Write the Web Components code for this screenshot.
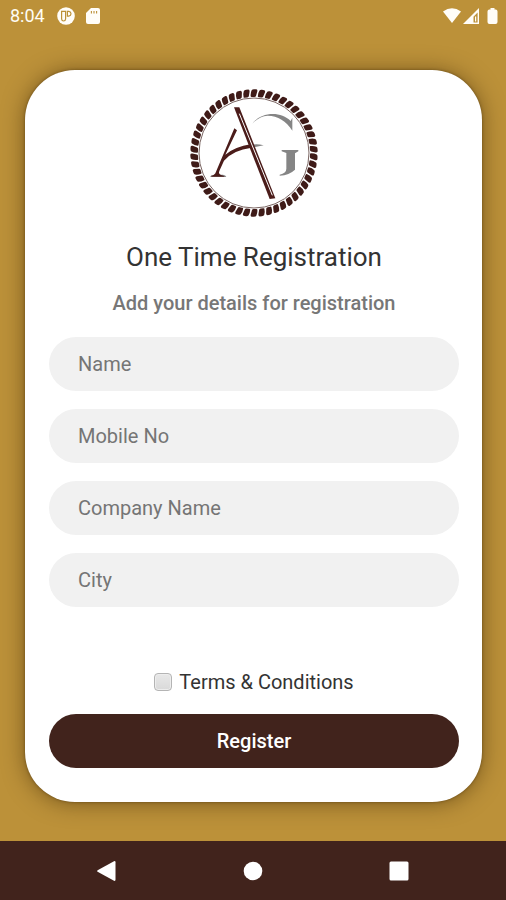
<!DOCTYPE html>
<html lang="en">
<head>
<meta charset="utf-8">
<meta name="viewport" content="width=device-width, initial-scale=1">
<title>One Time Registration</title>
<style>
  html { height: 100%; }
  body { margin: 0; min-height: 100%; display: flex; background: #bc9139; font-family: Roboto, "Liberation Sans", sans-serif; }
</style>
</head>
<body>
<app-screen>
  <status-bar slot="top">8:04</status-bar>
  <registration-card>
    <brand-logo slot="logo"></brand-logo>
    <span slot="title">One Time Registration</span>
    <span slot="subtitle">Add your details for registration</span>
    <pill-field label="Name"></pill-field>
    <pill-field label="Mobile No" type="tel"></pill-field>
    <pill-field label="Company Name"></pill-field>
    <pill-field label="City"></pill-field>
    <terms-check slot="terms">Terms &amp; Conditions</terms-check>
    <pill-button slot="action">Register</pill-button>
  </registration-card>
  <navigation-bar slot="bottom"></navigation-bar>
</app-screen>
<script>
const define = (name, html, setup) => {
  const template = document.createElement('template');
  template.innerHTML = html;
  customElements.define(name, class extends HTMLElement {
    constructor() {
      super();
      this.attachShadow({ mode: 'open' }).append(template.content.cloneNode(true));
    }
    connectedCallback() {
      if (setup) setup(this, this.shadowRoot);
    }
  });
};

define('app-screen', `
  <style>
    :host { flex: 1; display: flex; flex-direction: column; min-height: 100vh; }
    main { flex: 1; padding: 38px 24px 39px 25px; display: flex; flex-direction: column; }
  </style>
  <slot name="top"></slot>
  <main><slot></slot></main>
  <slot name="bottom"></slot>`);

define('status-bar', `
  <style>
    :host { display: flex; align-items: center; height: 32px; padding: 0 8px 0 10px; color: #fffdf5; font-size: 18px; line-height: 24px; }
    svg { display: block; fill: #fffdf8; }
    .alerts { display: flex; flex: 1; gap: 10px; padding-left: 12px; }
    .system { display: flex; gap: 2px; }
    .system svg:last-child { margin-left: 6px; }
  </style>
  <slot></slot>
  <div class="alerts">
    <svg width="18" height="18" viewBox="0 0 18 18"><circle cx="9" cy="9" r="8.8"/><path d="M4.6 4.4v7.6q.2 2 2 2t2-2V4.4z" fill="none" stroke="#bc9139" stroke-width="1.2"/><path d="M10.4 4.4h1.4q2.2.4 2.2 2.4t-2.2 2.4h-1.4z" fill="none" stroke="#bc9139" stroke-width="1.2"/></svg>
    <svg width="16" height="18" viewBox="0 0 16 18"><path d="M6 1h7q2 0 2 2v12q0 2-2 2H3q-2 0-2-2V6z"/><path d="M6.4 4v2.4M9 4v2.4M11.6 4v2.4" stroke="#bc9139" stroke-width="1.1"/></svg>
  </div>
  <div class="system">
    <svg width="18" height="18" viewBox="0 0 18 18"><path d="M0 4.5Q9-2 18 4.5L9 16z"/></svg>
    <svg width="16" height="18" viewBox="0 0 16 18"><path d="M0 17 16 1v16z"/><path d="M10.5 15.5V9.8L14.6 5.5v10z" fill="#bc9139"/><path d="M12 9.5h1.2v5H12z"/></svg>
    <svg width="11" height="18" viewBox="0 0 11 18"><path d="M3.5 1h4v1.5H9q1.5.5 1.5 2V15q0 2-2 2H2.5q-2 0-2-2V4.500q0-1.500 1.500-2h1.500z"/></svg>
  </div>`);

define('registration-card', `
  <style>
    :host { flex: 1; display: flex; flex-direction: column; background: #fff; border-radius: 50px; padding: 19px 23px 34px 24px; box-shadow: 0 1px 22px rgba(50, 30, 0, .5), 0 0 3px rgba(60, 35, 0, .5); }
    form { flex: 1; display: flex; flex-direction: column; }
    header { display: flex; flex-direction: column; align-items: center; text-align: center; }
    h1 { margin: 24px 0 0; font-size: 26px; line-height: 32px; font-weight: 400; color: #333; }
    p { margin: 17px 0 0; font-size: 20px; line-height: 26px; font-weight: 500; color: #777; }
    .fields { display: grid; gap: 18px; margin-top: 21px; }
    footer { margin-top: auto; display: grid; gap: 19px; }
  </style>
  <form>
    <header>
      <slot name="logo"></slot>
      <h1><slot name="title"></slot></h1>
      <p><slot name="subtitle"></slot></p>
    </header>
    <div class="fields"><slot></slot></div>
    <footer><slot name="terms"></slot><slot name="action"></slot></footer>
  </form>`);

define('brand-logo', `
  <style>
    :host { display: block; }
    svg { display: block; width: 128px; height: 128px; }
  </style>
  <svg viewBox="29 28 384 384" role="img" aria-label="AG">
    <g class="rope" fill="#3f1b18"></g>
    <circle cx="221" cy="220" r="165" fill="none" stroke="#7a6562" stroke-width="3"/>
    <g fill="#858585">
      <path d="M216 132C240 98 300 92 331 124L336 114V153C317 123 293 109 262 108Q237 109 216 132Z"/>
      <path d="M304 211H354V215L344 221V270Q327 286 298 288V285Q318 280 318 267V220L304 215Z"/>
      <path d="M207 197Q227 191 250 197L225 202Z"/>
      <path d="M89 291Q92 285 105 285H128Q136 286 138 292Z"/>
    </g>
    <g fill="#4b1c1a">
      <path d="M161 83H177L285 356 268 358Z"/>
      <path d="M162 146 170 152 135 225Q165 201 211 194L214 204Q158 211 131 243L117 274Q112 285 129 288L133 291H93V288Q103 287 107 276Z"/>
    </g>
    <path d="M177 102 276 347" fill="none" stroke="#fff" stroke-width="3"/>
  </svg>`, (host, root) => {
  const rope = root.querySelector('.rope');
  const beads = 50;
  for (let i = 0; i < beads; i++) {
    const bead = document.createElementNS('http://www.w3.org/2000/svg', 'path');
    bead.setAttribute('d', 'M211 50Q210 40 214 32Q216 29 221 29H228Q232 30 231 35L227 49Q226 52 222 52H214Q211 52 211 50Z');
    bead.setAttribute('transform', `rotate(${i * 360 / beads} 221 220)`);
    rope.append(bead);
  }
});

define('pill-field', `
  <style>
    :host { display: block; }
    input { display: block; box-sizing: border-box; width: 100%; height: 54px; margin: 0; padding: 0 29px; border: 0; border-radius: 27px; background: #f1f1f1; color: #333; font: 400 20px/26px Roboto, "Liberation Sans", sans-serif; }
    input::placeholder { color: #757575; opacity: 1; }
  </style>
  <input type="text">`, (host, root) => {
  const input = root.querySelector('input');
  input.placeholder = host.getAttribute('label');
  input.setAttribute('aria-label', host.getAttribute('label'));
  input.type = host.getAttribute('type') || 'text';
});

define('terms-check', `
  <style>
    :host { display: flex; justify-content: center; }
    label { display: flex; align-items: center; gap: 7px; font-size: 20px; line-height: 26px; color: #333; }
    input { appearance: none; box-sizing: border-box; width: 18px; height: 18px; margin: 0; border: 1px solid #b4b4b4; border-radius: 4px; background: linear-gradient(#e8e8e8, #d9d9d9); box-shadow: inset 0 0 0 1px #ededed; }
    input:checked { background: #43231d; }
  </style>
  <label><input type="checkbox"><span><slot></slot></span></label>`);

define('pill-button', `
  <style>
    :host { display: block; }
    button { display: block; width: 100%; height: 54px; padding: 0; border: 0; border-radius: 27px; background: #41231c; color: #fff; font: 500 20px/26px Roboto, "Liberation Sans", sans-serif; }
  </style>
  <button type="button"><slot></slot></button>`);

define('navigation-bar', `
  <style>
    :host { display: block; background: #41231c; }
    nav { display: flex; justify-content: space-between; align-items: center; height: 59px; padding: 0 18%; box-sizing: border-box; }
    button { display: block; width: 32px; height: 32px; padding: 6px; border: 0; background: none; }
    svg { display: block; width: 20px; height: 20px; fill: #fff; }
  </style>
  <nav>
    <button type="button" aria-label="Back"><svg viewBox="0 0 20 20"><path d="M.6 9.200 17 .2q1.500-.5 1.500 1v17.600q0 1.500-1.500 1L.6 10.800q-1-.8 0-1.600z"/></svg></button>
    <button type="button" aria-label="Home"><svg viewBox="0 0 20 20"><circle cx="10" cy="10" r="9.300"/></svg></button>
    <button type="button" aria-label="Overview"><svg viewBox="0 0 20 20"><rect x=".5" y=".5" width="19" height="19" rx="1.500"/></svg></button>
  </nav>`);
</script>
</body>
</html>
